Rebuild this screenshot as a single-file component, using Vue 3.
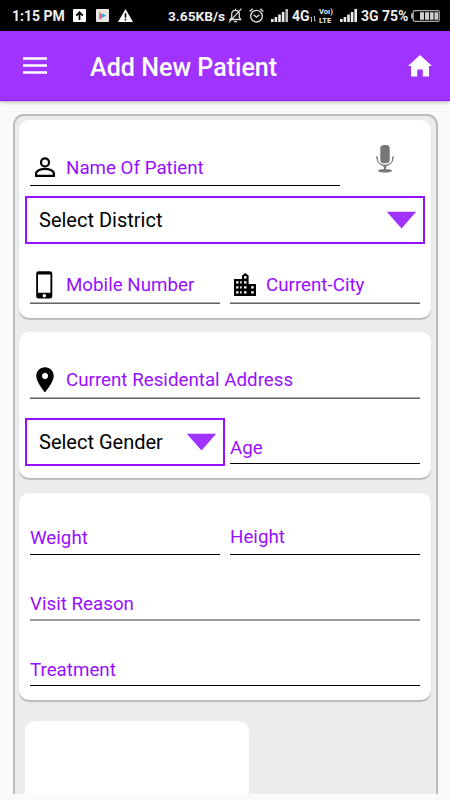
<script setup>
const bars = [3, 5, 7.5, 10, 13]
</script>

<template>
  <div class="screen">
    <header class="status">
      <span class="st time">1:15 PM</span>
      <svg class="s-up" width="13" height="13" viewBox="0 0 13 13">
        <rect width="13" height="13" rx="1" fill="#fff" />
        <path d="M6.5 11V4M3.2 6.6 6.5 3.2l3.3 3.4" fill="none" stroke="#000" stroke-width="1.8" />
      </svg>
      <svg class="s-play" width="13" height="13" viewBox="0 0 13 13">
        <rect width="13" height="13" rx="1" fill="#e9e6e6" />
        <path d="M3 2.5v8l4-4z" fill="#d56bc0" />
        <path d="M3 2.5 6.8 4.6 5.2 6.5z" fill="#f4ad42" />
        <path d="M6.6 4.4 10.2 6.5 6.6 8.6 4.8 6.5z" fill="#39a9d8" />
        <path d="M3 10.5 6.8 8.4 5.2 6.5z" fill="#ef5c80" />
      </svg>
      <svg class="s-warn" width="15" height="13" viewBox="0 0 15 13">
        <path d="M7.5 0 15 13H0z" fill="#fff" />
        <path d="M7.5 4.3v4.4M7.5 9.8v1.7" stroke="#000" stroke-width="1.6" />
      </svg>
      <span class="st speed">3.65KB/s</span>
      <svg class="s-bell" width="15" height="15" viewBox="0 0 15 15" fill="none" stroke="#ddd" stroke-width="1.3">
        <path d="M2 11.5h10.7L11.3 9.3V6.2C11.3 3.8 9.5 2.3 7.500 2.300S3.700 3.800 3.700 6.200V9.300zM6 13.600h3M7.500 2.300V.8M13.500.6 1 14.400" />
      </svg>
      <svg class="s-alarm" width="15" height="15" viewBox="0 0 15 15" fill="none" stroke="#ddd" stroke-width="1.4">
        <circle cx="7.5" cy="8.2" r="5.8" />
        <path d="M4.6 6.8 7.5 9.2 10.4 6.8M.6 3.5 3.7.8M14.4 3.5 11.3.8" />
      </svg>
      <svg class="s-sig" width="18" height="13" viewBox="0 0 18 13">
        <rect v-for="(h, i) in bars" :key="i" :x="i * 3.6" :y="13 - h" width="2.6" :height="h" :fill="i < 4 ? '#eee' : '#bbb'" />
      </svg>
      <span class="st net">4G</span>
      <svg class="s-data" width="6" height="6" viewBox="0 0 6 6" fill="none" stroke="#bbb" stroke-width="1">
        <path d="M1.5 6V1M.3 2 1.5.8M4.5 0v5M5.7 4 4.5 5.2" />
      </svg>
      <span class="volte"><span>Voı)</span><span>LTE</span></span>
      <svg class="s-sig2" width="18" height="13" viewBox="0 0 18 13">
        <rect v-for="(h, i) in bars" :key="i" :x="i * 3.6" :y="13 - h" width="2.6" :height="h" fill="#eee" />
      </svg>
      <span class="st net2">3G</span>
      <span class="st pct">75%</span>
      <svg class="s-bat" width="29" height="12" viewBox="0 0 29 12">
        <rect x="2.2" y=".7" width="26" height="10.6" rx="1.6" fill="none" stroke="#aaa" stroke-width="1.3" />
        <rect x="0" y="3.5" width="2" height="5" fill="#aaa" />
        <path d="M9 2.300h4v7.400H9zM14 2.300h4v7.400h-4zM18.900 2.300h3.700v7.400h-3.700zM23.500 2.300h3.500v7.400h-3.500z" fill="#ccc" />
      </svg>
    </header>

    <nav class="toolbar">
      <svg class="menu" width="24" height="18" viewBox="0 0 24 18">
        <path d="M0 1.500h24M0 8.500h24M0 15.500h24" stroke="#fff" stroke-width="2.400" />
      </svg>
      <h1>Add New Patient</h1>
      <svg class="home" width="24" height="22" viewBox="0 0 24 22">
        <path d="M12 0 24 11h-3v10.500h-6.200v-7H9.200v7H3V11H0z" fill="#fff" />
      </svg>
    </nav>

    <main class="panel">
      <section class="card first">
        <div class="row">
          <div class="field name">
            <svg class="icon" width="30" height="30" viewBox="0 0 30 30" fill="none" stroke="#000" stroke-width="2.200">
              <circle cx="15" cy="10.400" r="4" />
              <path d="M6.100 23.800v-2.100c0-3.200 5.400-4.800 8.900-4.800s8.900 1.600 8.900 4.800v2.100z" />
            </svg>
            <label>Name Of Patient</label>
          </div>
          <svg class="mic" width="20" height="30" viewBox="0 0 20 30">
            <rect x="5.300" y="1" width="9.400" height="18.300" rx="3.600" fill="#777" />
            <path d="M2 13.500C2.200 18.500 5.500 21.300 10 21.300S17.800 18.500 18 13.500M1 13.300h2M17 13.300h2" fill="none" stroke="#777" stroke-width="1.200" />
            <path d="M7.500 21.300h5L11 23.500v2.500H9v-2.500z" fill="#777" />
            <ellipse cx="10" cy="26.700" rx="7" ry="1.700" fill="#777" />
          </svg>
        </div>
        <div class="select wide">
          <span>Select District</span>
          <svg width="31" height="18" viewBox="0 0 31 18"><path d="M.8.7h29.400L15.500 17.400z" fill="#a033ff" /></svg>
        </div>
        <div class="row pair">
          <div class="field mobile soft">
            <svg class="icon" width="30" height="30" viewBox="0 0 30 30">
              <path fill-rule="evenodd" d="M8.600 1.200h11.300q2.400 0 2.400 2.400v22.600q0 2.400-2.400 2.400H8.600q-2.400 0-2.400-2.400V3.600q0-2.400 2.400-2.400zM8 4.500v18.300h12.400V4.500zM14.300 24a1.700 1.700 0 1 0 .01 0z" />
            </svg>
            <label>Mobile Number</label>
          </div>
          <div class="field mobile soft">
            <svg class="icon" width="30" height="30" viewBox="0 0 30 30">
              <path fill-rule="evenodd" d="M4 9h8V5.500L15.200 3 18.600 5.500V14H26v12H4zM6.200 11.200v2.300h2.300v-2.300zM6.200 16.200v2.300h2.300v-2.300zM6.200 21.200v2.300h2.300v-2.300zM14 6.200v2.300h2.500V6.200zM14 11.200v2.300h2.500v-2.300zM14 16.200v2.300h2.500v-2.300zM14 21.200v2.300h2.500v-2.300zM10.200 11.200v2.300h1.500v-2.300zM10.200 16.200v2.300h1.500v-2.300zM10.200 21.200v2.300h1.500v-2.300zM21.200 16.200v2.300h2.500v-2.300zM21.200 21.200v2.300h2.500v-2.300z" />
            </svg>
            <label>Current-City</label>
          </div>
        </div>
      </section>

      <section class="card second">
        <div class="field address soft">
          <svg class="icon" width="30" height="30" viewBox="0 0 30 30">
            <path fill-rule="evenodd" d="M15 2.300c-5 0-8.700 3.700-8.700 8.600C6.300 17.200 15 27.300 15 27.300s8.700-10.100 8.700-16.400C23.700 6 20 2.300 15 2.300zM15 7.800a3.100 3.100 0 1 0 .01 0z" />
          </svg>
          <label>Current Residental Address</label>
        </div>
        <div class="row">
          <div class="select half">
            <span>Select Gender</span>
            <svg width="31" height="18" viewBox="0 0 31 18"><path d="M.8.7h29.400L15.500 17.400z" fill="#a033ff" /></svg>
          </div>
          <div class="field age"><label>Age</label></div>
        </div>
      </section>

      <section class="card third">
        <div class="row pair">
          <div class="field weight"><label>Weight</label></div>
          <div class="field height"><label>Height</label></div>
        </div>
        <div class="field reason"><label>Visit Reason</label></div>
        <div class="field treatment"><label>Treatment</label></div>
      </section>

      <section class="photo"></section>
    </main>
  </div>
</template>

<style>
body {
  background: #fafafa;
}
</style>

<style scoped>
* {
  box-sizing: border-box;
}
.screen {
  height: 800px;
  overflow: hidden;
  background: #fafafa;
  font-family: Roboto, sans-serif;
}
svg {
  display: block;
  flex: none;
}
.status {
  display: flex;
  height: 31px;
  background: #000;
  color: #eee;
  padding-top: 9px;
}
.st {
  font-size: 14px;
  line-height: 15px;
  font-weight: 700;
  white-space: nowrap;
  flex: none;
}
.time { width: 53px; margin-left: 12px; }
.s-up { margin-left: 8px; }
.s-play { margin-left: 10px; }
.s-warn { margin-left: 9px; }
.speed { width: 58px; margin-left: 35px; font-size: 13.7px; }
.s-bell { margin-left: 2px; margin-top: -1px; }
.s-alarm { margin-left: 6px; margin-top: -1px; }
.s-sig { margin-left: 7px; }
.net { width: 18px; margin-left: 3px; }
.s-data { margin: 7px 0 0 0; }
.volte {
  display: flex;
  flex-direction: column;
  width: 15px;
  margin: -2px 0 0 3px;
  font-size: 7.6px;
  line-height: 9px;
  font-weight: 700;
  flex: none;
  white-space: nowrap;
}
.s-sig2 { margin-left: 6px; }
.net2 { width: 18px; margin-left: 3px; }
.pct { width: 27px; margin-left: 3px; }
.s-bat { margin: 1px 0 0 2px; }

.toolbar {
  display: flex;
  align-items: center;
  height: 70px;
  padding: 0 18px 0 23px;
  background: #a033ff;
  border-bottom: 1px solid #9416fa;
  box-shadow: 0 1px 4px rgba(0, 0, 0, 0.3);
}
h1 {
  flex: 1;
  margin: 5px 0 0 43px;
  color: #fff;
  font-size: 25.1px;
  line-height: 30px;
  font-weight: 500;
}
.panel {
  width: 425px;
  height: 680px;
  margin: 13px 0 0 13px;
  padding: 4px;
  overflow: hidden;
  background: #ececec;
  border: 2px solid #bbb;
  border-bottom: 0;
  border-radius: 11px 11px 0 0;
}
.card {
  width: 412px;
  border-radius: 10px;
  background: #fff;
  box-shadow: 0 2px 1px #bbb;
}
.row { display: flex; }
.pair { gap: 10px; }
.pair .field { flex: 1; }
.field {
  display: flex;
  align-items: flex-end;
  border-bottom: 1px solid #000;
}
.soft {
  border-bottom: 0;
  background: linear-gradient(#aaa 50%, #666 50%) bottom / 100% 2px no-repeat;
}
label {
  color: #9610ff;
  font-size: 18.75px;
  line-height: 22px;
  white-space: nowrap;
}
.icon { margin-right: 6px; }
.select {
  display: flex;
  align-items: center;
  justify-content: space-between;
  height: 48px;
  border: 2px solid #9610ff;
  padding: 0 6.5px 0 12px;
  color: #000;
  font-size: 20px;
}
.select svg { margin-top: -1px; }
.first { height: 198px; padding-top: 22px; }
.first .row:first-child { padding-left: 11px; }
.name { width: 310px; height: 44px; padding-bottom: 6px; }
.name .icon { margin-bottom: -3px; }
.mic { margin: 2px 0 0 35px; }
.wide { width: 400px; margin: 10px 0 0 6px; }
.first .pair { margin: 0 11px; }
.mobile { height: 60px; padding-bottom: 8px; }
.mobile .icon { margin-bottom: -4px; }

.second { height: 146px; margin-top: 14px; padding-top: 20px; }
.address { height: 47px; margin: 0 11px; padding-bottom: 8px; }
.address .icon { margin-bottom: -4px; }
.half { width: 200px; margin: 19px 0 0 6px; }
.age { width: 190px; height: 46px; margin: 19px 0 0 5px; padding-bottom: 4px; }

.third { height: 207px; margin-top: 15px; padding: 20px 11px 0; }
.weight { height: 42px; padding-bottom: 5px; }
.height { height: 42px; padding-bottom: 6px; }
.reason { height: 66px; padding-bottom: 4px; border-bottom: 2px solid #999; }
.treatment { height: 65px; padding-bottom: 4px; }

.photo {
  width: 224px;
  height: 90px;
  margin: 21px 0 0 6px;
  border-radius: 10px;
  background: #fff;
}
</style>
